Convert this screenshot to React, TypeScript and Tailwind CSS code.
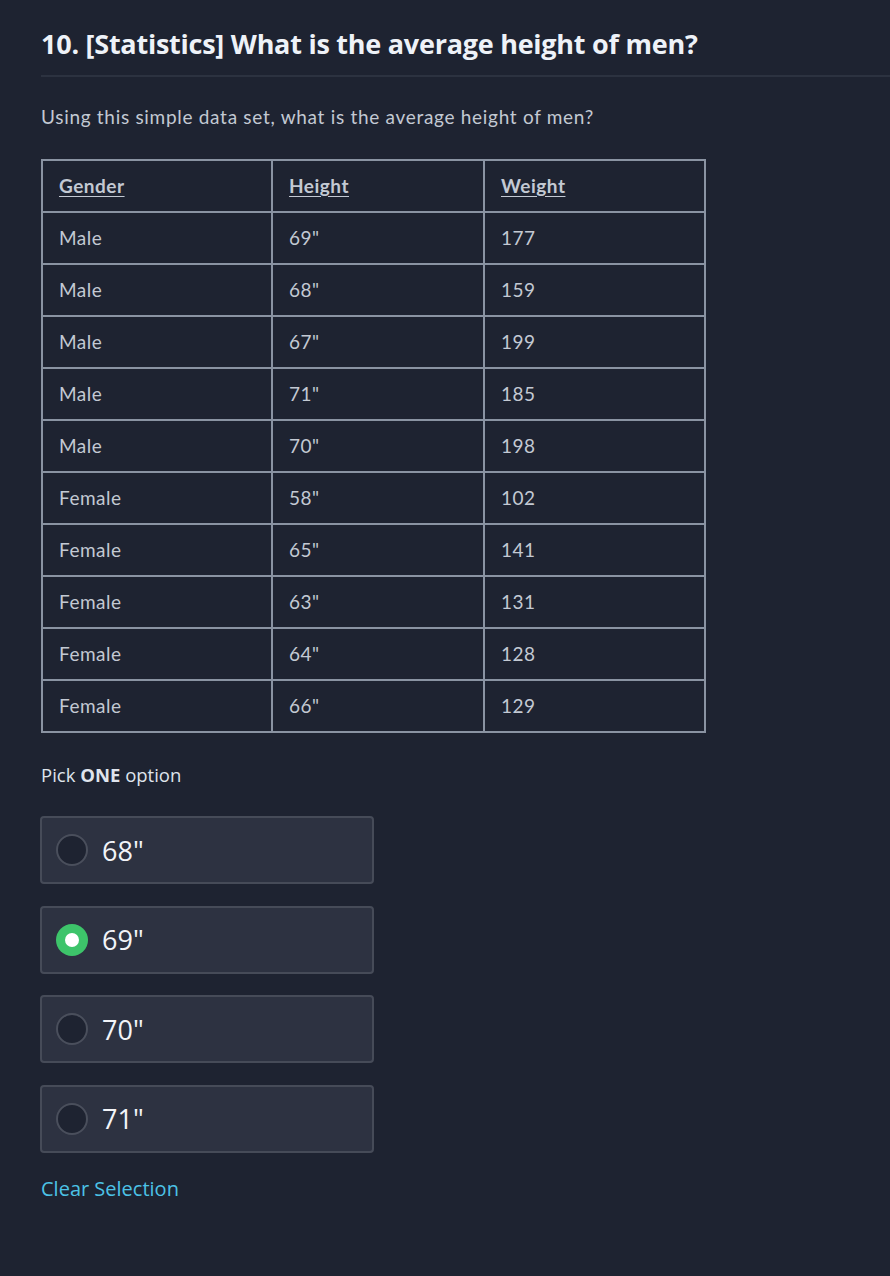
import { useState } from 'react';

const rows: [string, string, string][] = [
  ['Male', '69"', '177'],
  ['Male', '68"', '159'],
  ['Male', '67"', '199'],
  ['Male', '71"', '185'],
  ['Male', '70"', '198'],
  ['Female', '58"', '102'],
  ['Female', '65"', '141'],
  ['Female', '63"', '131'],
  ['Female', '64"', '128'],
  ['Female', '66"', '129'],
];

const options = ['68"', '69"', '70"', '71"'];

export default function App() {
  const [picked, setPicked] = useState<number | null>(1);

  return (
    <div className="min-h-[1276px] bg-[#1e2331] pl-[41px] pt-[28px] font-['Open_Sans',sans-serif]">
      <h1 className="text-[27px] font-bold leading-[32px] tracking-[-0.25px] text-[#eef2f8]">
        10. [Statistics] What is the average height of men?
      </h1>
      <div className="mt-[15px] h-[2px] bg-[#2c3240]" />

      <p className="mt-[28px] font-['Lato',sans-serif] text-[19px] leading-[24px] tracking-[0.7px] text-[#c3c9d3]">
        Using this simple data set, what is the average height of men?
      </p>

      <table className="mt-[30px] w-[665px] border-collapse font-['Lato',sans-serif] text-[19px] tracking-[0.5px] text-[#c3c9d3]">
        <colgroup>
          <col className="w-[230px]" />
          <col className="w-[212px]" />
          <col />
        </colgroup>
        <thead>
          <tr className="h-[52px]">
            {['Gender', 'Height', 'Weight'].map((h) => (
              <th key={h} className="border-2 border-[#8a93a2] px-[16px] text-left font-bold underline underline-offset-[3px]">
                {h}
              </th>
            ))}
          </tr>
        </thead>
        <tbody>
          {rows.map((r, i) => (
            <tr key={i} className="h-[52px]">
              {r.map((c, j) => (
                <td key={j} className="border-2 border-[#8a93a2] px-[16px]">
                  {c}
                </td>
              ))}
            </tr>
          ))}
        </tbody>
      </table>

      <p className="mt-[30px] text-[18.5px] leading-[24px] text-[#dfe4ec]">
        Pick <span className="font-bold">ONE</span> option
      </p>

      <div className="mt-[29px] flex w-[334px] -ml-px flex-col gap-[21.5px]">
        {options.map((o, i) => (
          <button
            key={o}
            onClick={() => setPicked(i)}
            className="flex h-[68px] items-center gap-[14px] rounded-[4px] border-2 border-[#464b58] bg-[#2d3241] pl-[14px] text-left"
          >
            {picked === i ? (
              <span className="flex h-[32px] w-[32px] items-center justify-center rounded-full bg-[#3dc46a]">
                <span className="h-[14px] w-[14px] rounded-full bg-white" />
              </span>
            ) : (
              <span className="h-[32px] w-[32px] rounded-full border-2 border-[#4a4f5c] bg-[#1e2331]" />
            )}
            <span className="text-[27px] leading-none text-[#f2f4f8]">{o}</span>
          </button>
        ))}
      </div>

      <button className="mt-[22px] text-[20px] leading-[28px] text-[#4cc2e6]" onClick={() => setPicked(null)}>
        Clear Selection
      </button>
    </div>
  );
}
